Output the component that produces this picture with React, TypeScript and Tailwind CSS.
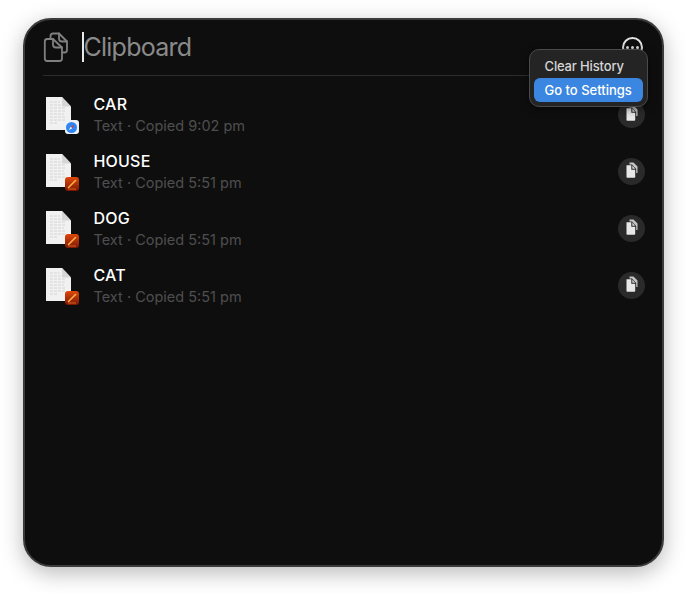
const rows = [
  { title: "CAR", time: "9:02 pm", app: "safari" },
  { title: "HOUSE", time: "5:51 pm", app: "pen" },
  { title: "DOG", time: "5:51 pm", app: "pen" },
  { title: "CAT", time: "5:51 pm", app: "pen" },
];

function CopyIcon() {
  return (
    <svg width="26" height="31" viewBox="0 0 26 31" fill="none" stroke="#808080" strokeWidth="1.800" strokeLinejoin="round" strokeLinecap="round" aria-hidden="true">
      <path d="M7.500 6V4Q7.500 1.500 10 1.500H16L24 9.500V18Q24 20.500 21.500 20.500H19.500" />
      <path d="M16 1.500V6.500Q16 9.500 19 9.500H24" />
      <path d="M1.800 9.500Q1.800 7 4.300 7H10L19 15.500V26.500Q19 29 16.500 29H4.300Q1.800 29 1.800 26.500Z" />
      <path d="M10 7V12.500Q10 15.500 13 15.500H19" />
    </svg>
  );
}

function SmallCopyIcon() {
  return (
    <svg width="14" height="18" viewBox="0 0 14 18" aria-hidden="true">
      <path d="M5.500 0.500H9.500L13.500 4.500V11H12.200V7L8 2.500H5.500Z" fill="#c4c4c4" />
      <path d="M2.500 3.200H7.300V7.800H11.200V15Q11.200 15.800 10.400 15.800H3.300Q2.500 15.800 2.500 15Z" fill="#e8e8e8" />
      <path d="M8.300 3.400L11.200 6.800H8.300Z" fill="#d6d6d6" />
    </svg>
  );
}

function DocIcon({ app }: { app: string }) {
  return (
    <div className="relative h-[36px] w-[36px] shrink-0">
      <svg width="27" height="35" viewBox="0 0 27 35" className="ml-[-1px] mt-[-1px]" aria-hidden="true">
        <path d="M1 1H17L26 10.500V34H1Z" fill="#f1f1f1" />
        <path d="M17 1L26 10.500H17Z" fill="#d6d6d6" />
        <g stroke="#d4d4d4" strokeWidth="1" strokeDasharray="3 1">
          <path d="M5 6H15M5 9H16M5 12H20M5 15H21M5 18H19M5 21H21M5 24H20M5 27H13" />
        </g>
      </svg>
      {app === "safari" ? (
        <div className="absolute left-[19px] top-[23px] flex h-[14px] w-[14px] items-center justify-center rounded-[3px] bg-[#eef1f5]">
          <svg width="11" height="11" viewBox="0 0 10 10" aria-hidden="true">
            <circle cx="5" cy="5" r="5" fill="#2f86f2" />
            <path d="M7.500 2.500L5.700 5.700L4.300 4.300Z" fill="#e5392f" />
            <path d="M2.500 7.500L4.300 4.300L5.700 5.700Z" fill="#f4f4f4" />
          </svg>
        </div>
      ) : (
        <div className="absolute left-[19px] top-[23px] flex h-[14px] w-[14px] items-center justify-center rounded-[3px] bg-gradient-to-b from-[#e0480a] to-[#7d1605]">
          <svg width="12" height="12" viewBox="0 0 12 12" aria-hidden="true">
            <path d="M2.500 9.500L9.500 2.500" stroke="#ffb347" strokeWidth="1.600" strokeLinecap="round" />
            <path d="M2 11H10" stroke="#e8791f" strokeWidth="0.800" />
          </svg>
        </div>
      )}
    </div>
  );
}

export default function App() {
  return (
    <div className="flex h-[593px] w-[686px] items-start justify-center bg-white pt-[18px] font-['Inter','Liberation_Sans',sans-serif]">
      <div className="relative h-[549px] w-[641px] rounded-[28px] border-2 border-[#3b3b3b] bg-[#0e0e0e] shadow-[0_6px_22px_rgba(0,0,0,0.28)]">
        <div className="mx-[18px] flex h-[56px] items-center border-b border-[#2c2c2c] pb-[1px]">
          <div className="shrink-0">
            <CopyIcon />
          </div>
          <div className="ml-[13px] h-[30px] w-[2px] bg-[#e8e8e8]" />
          <span className="text-[25px] leading-[30px] tracking-[-0.75px] text-[#8a8a8a]">Clipboard</span>
          <div className="ml-auto mr-[1px] flex h-[21px] w-[21px] items-center justify-center rounded-full border-2 border-[#e2e2e2]">
            <div className="flex gap-[2px]">
              <span className="h-[3px] w-[3px] rounded-full bg-[#e2e2e2]" />
              <span className="h-[3px] w-[3px] rounded-full bg-[#e2e2e2]" />
              <span className="h-[3px] w-[3px] rounded-full bg-[#e2e2e2]" />
            </div>
          </div>
        </div>

        <div className="ml-[21px] mr-[17px] mt-[18px] flex flex-col gap-[15px]">
          {rows.map((row) => (
            <div key={row.title} className="flex h-[42px] items-center">
              <DocIcon app={row.app} />
              <div className="ml-[12px] flex flex-col">
                <span className="text-[16px] leading-[20px] font-[450] tracking-[0.2px] text-white">{row.title}</span>
                <span className="mt-[2px] text-[14.500px] leading-[20px] text-[#4e4e4e]">Text · Copied {row.time}</span>
              </div>
              <div className="ml-auto mt-[-2px] flex h-[27px] w-[27px] items-center justify-center rounded-full bg-[#2a2a2a]">
                <SmallCopyIcon />
              </div>
            </div>
          ))}
        </div>

        <div className="absolute left-[504px] top-[29px] flex h-[58px] w-[119px] flex-col rounded-[10px] border border-[#4a4a4a] bg-[#242424] px-[4px] pt-[5px] shadow-[0_2px_8px_rgba(0,0,0,0.5)]">
          <div className="h-[23px] whitespace-nowrap pl-[11px] text-[13px] leading-[23px] font-medium tracking-[-0.15px] text-[#d6d6d6]">Clear History</div>
          <div className="h-[24px] whitespace-nowrap rounded-[6px] bg-[#3b86e0] pl-[11px] text-[13px] leading-[24px] font-medium text-white">Go to Settings</div>
        </div>
      </div>
    </div>
  );
}
